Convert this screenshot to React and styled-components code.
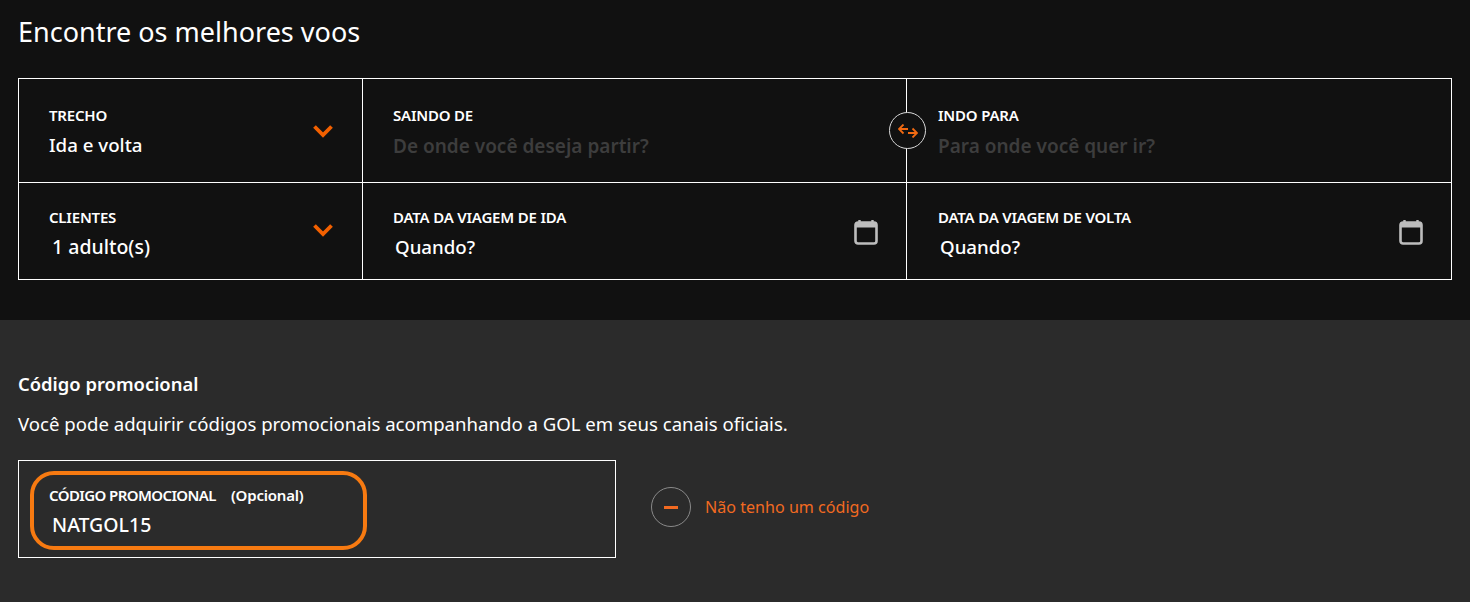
import React from "react";
import styled, { createGlobalStyle } from "styled-components";

const Global = createGlobalStyle`
  html, body { margin: 0; padding: 0; background: #2b2b2b; }
  body { font-family: "Noto Sans", "Open Sans", sans-serif; color: #fff; }
  * { box-sizing: border-box; }
`;

const Page = styled.div`width: 1470px; height: 602px; overflow: hidden; display: flex; flex-direction: column;`;
const SearchSection = styled.section`height: 320px; background: #111111; padding: 15px 18px 0;`;
const Title = styled.h1`margin: 0 0 28px; height: 35px; font-size: 27px; line-height: 33px; font-weight: 400;`;
const Grid = styled.div`
  width: 1434px; display: grid; grid-template-columns: 343px 544px 545px; grid-template-rows: 103px 97px;
  border: 1px solid #fff;
`;
const Cell = styled.div`
  position: relative; display: flex; justify-content: space-between; align-items: flex-start;
  padding: ${p => (p.$top ? "27px" : "25px")} 27px 0 ${p => (p.$last ? 31 : 30)}px;
  border-left: ${p => (p.$first ? "none" : "1px solid #fff")};
  border-top: ${p => (p.$top ? "none" : "1px solid #fff")};
`;
const FieldText = styled.div`display: flex; flex-direction: column;`;
const Label = styled.div`font-size: 15px; line-height: 18px; font-weight: 600; color: #fff; white-space: pre; letter-spacing: -0.2px;`;
const PromoLabel = styled(Label)`letter-spacing: -0.6px;`;
const Value = styled.div`
  margin-top: 9px; padding-left: ${p => p.$indent || 0}px;
  font-size: ${p => p.$size || 18.7}px; line-height: 23px; font-weight: 500;
`;
const Placeholder = styled.div`
  margin-top: 11px; font-size: 19px; line-height: 23px; font-weight: 600; color: #3d3d3d;
`;
const Chevron = styled.svg`width: 22px; height: 16px; margin-top: ${p => p.$mt}px; margin-right: 1px;`;
const CalendarIcon = styled.svg`width: 24px; height: 26px; margin-top: 11px; margin-right: ${p => p.$mr}px;`;
const SwapBadge = styled.div`
  position: absolute; left: -18px; top: 33px; width: 37px; height: 37px; border-radius: 50%;
  border: 1px solid #d9d9d9; background: #111111; display: flex; align-items: center; justify-content: center;
`;

const PromoSection = styled.section`flex: 1; background: #2b2b2b; padding: 52px 18px 0;`;
const PromoTitle = styled.h2`margin: 0; font-size: 18.4px; line-height: 24px; font-weight: 600;`;
const PromoText = styled.p`margin: 16px 0 0; font-size: 18.6px; line-height: 24px; font-weight: 400;`;
const PromoRow = styled.div`margin-top: 24px; display: flex; align-items: center; gap: 35px;`;
const PromoBox = styled.div`
  position: relative; width: 598px; height: 98px; border: 1px solid #fff; padding: 25px 30px 0;
`;
const Highlight = styled.div`
  position: absolute; left: 11px; top: 10px; width: 337px; height: 79px;
  border: 4.5px solid #f77a11; border-radius: 24px;
`;
const InlineNote = styled.span`margin-left: 15px; letter-spacing: -0.2px;`;
const RemoveButton = styled.div`display: flex; align-items: center; gap: 14px; margin-top: -4px;`;
const RemoveCircle = styled.div`
  width: 40px; height: 40px; border-radius: 50%; border: 1px solid #8a8a8a;
  display: flex; align-items: center; justify-content: center;
`;
const MinusBar = styled.div`width: 14px; height: 3px; background: #f26a21;`;
const RemoveText = styled.span`font-size: 16.1px; line-height: 22px; color: #f26a21;`;

const Down = ({ mt }) => (
  <Chevron $mt={mt} viewBox="0 0 22 16" fill="none">
    <path d="M2.5 3.5 L11 12 L19.5 3.5" stroke="#f26000" strokeWidth="3.8" />
  </Chevron>
);
const Calendar = ({ mr = 1 }) => (
  <CalendarIcon $mr={mr} viewBox="0 0 24 26" fill="none">
    <path d="M5.5 1v4M18.5 1v4" stroke="#bdbdbd" strokeWidth="2.4" />
    <rect x="1.5" y="3.5" width="21" height="21" rx="2.5" stroke="#bdbdbd" strokeWidth="2.6" />
    <rect x="1.5" y="3.5" width="21" height="5" fill="#bdbdbd" />
  </CalendarIcon>
);

export default function App() {
  return (
    <Page>
      <Global />
      <SearchSection>
        <Title>Encontre os melhores voos</Title>
        <Grid>
          <Cell $first $top>
            <FieldText><Label>TRECHO</Label><Value>Ida e volta</Value></FieldText>
            <Down mt={17} />
          </Cell>
          <Cell $top>
            <FieldText><Label>SAINDO DE</Label><Placeholder>De onde você deseja partir?</Placeholder></FieldText>
          </Cell>
          <Cell $top $last>
            <SwapBadge>
              <svg width="20" height="14" viewBox="0 0 20 14" fill="none" stroke="#f26a12" strokeWidth="1.8">
                <path d="M10 5H1M5.5.5 1 5l4.5 4.5M10 9h9M14.5 4.5 19 9l-4.5 4.5" />
              </svg>
            </SwapBadge>
            <FieldText><Label>INDO PARA</Label><Placeholder>Para onde você quer ir?</Placeholder></FieldText>
          </Cell>
          <Cell $first>
            <FieldText><Label>CLIENTES</Label><Value $indent={3} $size={19.5}>1 adulto(s)</Value></FieldText>
            <Down mt={14} />
          </Cell>
          <Cell>
            <FieldText><Label>DATA DA VIAGEM DE IDA</Label><Value $indent={2}>Quando?</Value></FieldText>
            <Calendar />
          </Cell>
          <Cell $last>
            <FieldText><Label>DATA DA VIAGEM DE VOLTA</Label><Value $indent={2}>Quando?</Value></FieldText>
            <Calendar mr={1} />
          </Cell>
        </Grid>
      </SearchSection>
      <PromoSection>
        <PromoTitle>Código promocional</PromoTitle>
        <PromoText>Você pode adquirir códigos promocionais acompanhando a GOL em seus canais oficiais.</PromoText>
        <PromoRow>
          <PromoBox>
            <Highlight />
            <PromoLabel>CÓDIGO PROMOCIONAL<InlineNote>(Opcional)</InlineNote></PromoLabel>
            <Value $indent={3} $size={19.5}>NATGOL15</Value>
          </PromoBox>
          <RemoveButton>
            <RemoveCircle><MinusBar /></RemoveCircle>
            <RemoveText>Não tenho um código</RemoveText>
          </RemoveButton>
        </PromoRow>
      </PromoSection>
    </Page>
  );
}
